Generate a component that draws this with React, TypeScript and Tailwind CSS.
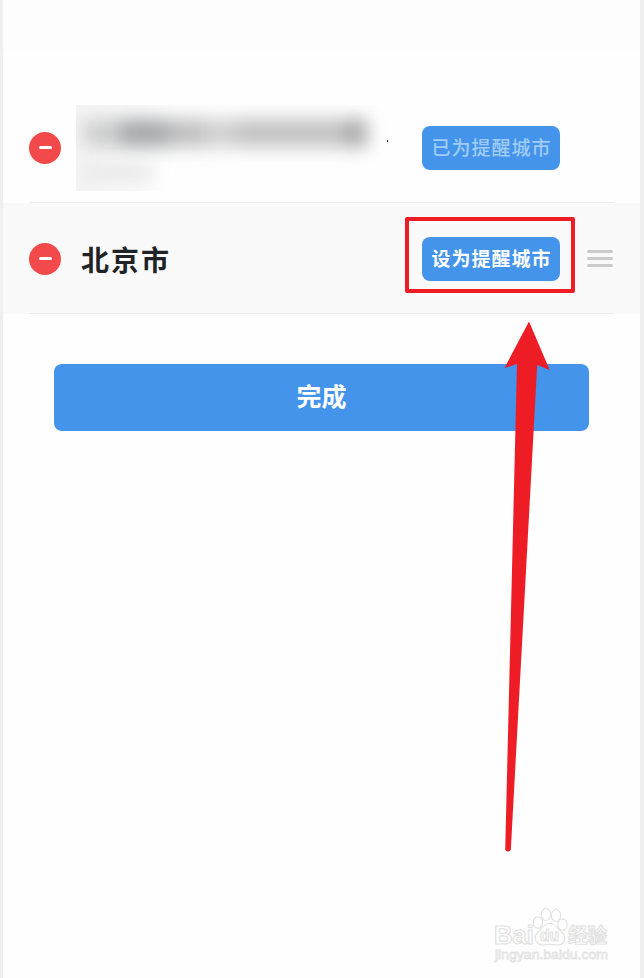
import React from 'react';

function RemoveButton() {
  return (
    <button
      className="flex h-8 w-8 shrink-0 items-center justify-center rounded-full bg-[#f24a4a]"
      aria-label="删除"
    >
      <span className="h-[3px] w-[13px] rounded-full bg-white" />
    </button>
  );
}

function DragHandle() {
  return (
    <div className="flex w-[26px] flex-col gap-1">
      <span className="h-[3px] rounded-full bg-[#cbcbcb]" />
      <span className="h-[3px] rounded-full bg-[#cbcbcb]" />
      <span className="h-[3px] rounded-full bg-[#cbcbcb]" />
    </div>
  );
}

function HiddenCity() {
  return (
    <div className="flex h-[86px] w-[312px] items-center">
      <div className="flex h-full w-[311px] flex-col gap-[18px] overflow-hidden bg-linear-to-r from-[#f4f4f4] via-[#fefefe] via-30% to-[#fefefe] pl-2 pt-[14px]">
        <div className="flex h-7 w-[283px] shrink-0 blur-[9px]">
          <span className="w-9 bg-[#cdcdcd]" />
          <span className="w-12 bg-[#a4a7a8]" />
          <span className="w-9 bg-[#bebebe]" />
          <span className="w-8 bg-[#d0d0d0]" />
          <span className="w-24 bg-[#c2c2c2]" />
          <span className="w-3 bg-[#c4c4c4]" />
          <span className="w-[23px] bg-[#a8a8a8]" />
        </div>
        <div className="h-4 w-[68px] shrink-0 bg-[#e8e8e8] blur-[8px]" />
      </div>
      <span className="mb-[13px] h-[2px] w-px bg-[#222]" />
    </div>
  );
}

function Arrow() {
  return (
    <svg
      className="pointer-events-none absolute left-[492px] top-[315px]"
      width="60"
      height="545"
      viewBox="495 315 60 545"
      fill="#ee1c25"
    >
      <path d="M529 321.5 L549.7 370 L537.2 365 L510.8 850 Q508 853 505.2 850 L517 364 L504.5 368 Z" />
    </svg>
  );
}

function Watermark() {
  return (
    <svg
      className="pointer-events-none absolute left-[485px] top-[902px]"
      width="130"
      height="66"
      viewBox="488 902 130 66"
      fill="#fff"
      stroke="#e2e2e2"
      strokeWidth="1.2"
      fontFamily='"Liberation Sans", "Noto Sans CJK SC", sans-serif'
      fontWeight="700"
    >
      <text x="494" y="944" fontSize="26" textLength="40" lengthAdjust="spacingAndGlyphs">Bai</text>
      <ellipse cx="538" cy="922.5" rx="4.7" ry="5.7" />
      <ellipse cx="546" cy="914.5" rx="4.7" ry="6" />
      <ellipse cx="556" cy="915.5" rx="4.7" ry="6" />
      <ellipse cx="562.5" cy="924.5" rx="4.7" ry="5.7" />
      <path d="M549.5 923.5 C543 923.5 542 929 537.5 933 C533 937 536 945 543 945 C548 944 552 944 557 945 C565 945 567 937 562 932.5 C558 929 556 923.5 549.5 923.5 Z" />
      <text x="540" y="941" fontSize="17" textLength="19" lengthAdjust="spacingAndGlyphs">du</text>
      <text x="568" y="943" fontSize="20" textLength="39" lengthAdjust="spacingAndGlyphs">经验</text>
      <text x="495" y="959" fontSize="13" fontWeight="400" strokeWidth="0.8" textLength="113" lengthAdjust="spacingAndGlyphs">jingyan.baidu.com</text>
    </svg>
  );
}

export default function App() {
  return (
    <div className="relative flex h-[978px] w-[644px] flex-col overflow-hidden border-l-[3px] border-r-4 border-[#efefef] bg-[#fefefe] font-['Noto_Sans_CJK_SC',sans-serif]">
      <div className="h-[51px] bg-[#fdfdfd]" />

      <div className="flex flex-col pt-[42px]">
        <div className="px-[26px]">
          <div className="flex h-[110px] items-center border-b border-[#ececec]">
            <RemoveButton />
            <div className="flex flex-1 items-center justify-between pl-[15px] pr-[54px]">
              <HiddenCity />
              <button className="flex h-11 w-[138px] items-center justify-center rounded-lg bg-[#4394ea] pl-px text-[19px] font-medium tracking-[1px] text-[#a0ccf7]">
                已为提醒城市
              </button>
            </div>
          </div>
        </div>

        <div className="bg-[#f9f9f9] px-[26px]">
          <div className="flex h-[111px] items-center border-b border-[#ececec] pt-px">
            <RemoveButton />
            <div className="flex flex-1 items-center justify-between pl-5 pr-px">
              <span className="text-[28px] font-bold leading-none tracking-[2px] text-[#202326]">
                北京市
              </span>
              <div className="flex items-center gap-[27px]">
                <div className="relative">
                  <button className="flex h-11 w-[138px] items-center justify-center rounded-lg bg-[#4394ea] pl-px text-[19px] font-bold tracking-[1px] text-white">
                    设为提醒城市
                  </button>
                  <div className="pointer-events-none absolute -left-[17px] -top-5 h-[76px] w-[170px] rounded-[2px] border-4 border-[#ee1c25]" />
                </div>
                <DragHandle />
              </div>
            </div>
          </div>
        </div>
      </div>

      <div className="flex justify-center pt-[50px]">
        <button className="flex h-[67px] w-[535px] items-center justify-center rounded-lg bg-[#4394ea] pb-1 text-[25px] font-bold text-white">
          完成
        </button>
      </div>

      <Arrow />
      <Watermark />
    </div>
  );
}
